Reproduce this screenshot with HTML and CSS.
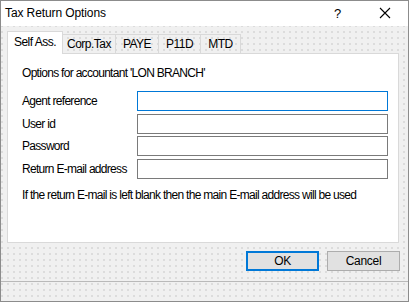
FILE: index.html
```html
<!DOCTYPE html>
<html>
<head>
<meta charset="utf-8">
<link rel="stylesheet" href="styles.css">
</head>
<body>
<div class="window">
  <div class="titlebar">
    <span class="title">Tax Return Options</span>
    <span class="help">?</span>
    <span class="close"><svg width="12" height="12" viewBox="0 0 12 12"><path d="M1 1L11 11M11 1L1 11" stroke="#000" stroke-width="1.1" fill="none"/></svg></span>
  </div>
  <div class="body">
    <div class="tabs">
      <div class="tab active">Self Ass.</div>
      <div class="tab">Corp.Tax</div>
      <div class="tab">PAYE</div>
      <div class="tab">P11D</div>
      <div class="tab">MTD</div>
    </div>
    <div class="panel">
      <div class="intro">Options for accountant 'LON BRANCH'</div>
      <div class="form">
        <label class="lbl">Agent reference</label><div class="field focused"></div>
        <label class="lbl">User id</label><div class="field"></div>
        <label class="lbl">Password</label><div class="field"></div>
        <label class="lbl">Return E-mail address</label><div class="field"></div>
      </div>
      <div class="note">If the return E-mail is left blank then the main E-mail address will be used</div>
    </div>
    <div class="buttons">
      <div class="btn default">OK</div>
      <div class="btn">Cancel</div>
    </div>
  </div>
  <div class="statusbar"></div>
</div>
</body>
</html>
```
FILE: styles.css
```css
html, body {
  margin: 0;
  padding: 0;
  background: #ffffff;
}
body {
  font-family: "Liberation Sans", Arial, sans-serif;
  font-size: 12px;
  color: #000;
}
.window {
  width: 409px;
  height: 302px;
  box-sizing: border-box;
  border: 1px solid #8c8c8c;
  display: flex;
  flex-direction: column;
  background-color: #f0f0f0;
  background-image: radial-gradient(circle at 1px 1px, #dcdcdc 0.7px, transparent 0.9px);
  background-size: 6px 6px;
}
.titlebar {
  height: 25px;
  background: #ffffff;
  display: flex;
  align-items: center;
  flex: none;
}
.title {
  margin-left: 4px;
  font-size: 12px;
  letter-spacing: -0.1px;
  flex: 1;
  padding-bottom: 1px;
}
.help {
  font-size: 13px;
  width: 12px;
  margin-right: 33px;
  padding-bottom: 1px;
}
.close {
  display: flex;
  margin-right: 17px;
  padding-bottom: 1px;
}
.body {
  height: 255px;
  box-sizing: border-box;
  padding: 5px 8px 0 6px;
  display: flex;
  flex-direction: column;
  flex: none;
}
.tabs {
  display: flex;
  align-items: flex-end;
  height: 22px;
  letter-spacing: -0.5px;
}
.tab {
  height: 19px;
  box-sizing: border-box;
  border: 1px solid #d9d9d9;
  border-bottom: none;
  border-left: none;
  padding: 0 5px;
  display: flex;
  align-items: center;
  justify-content: center;
}
.tab:nth-child(2) { width: 53px; }
.tab:nth-child(3) { width: 43px; }
.tab:nth-child(4) { width: 42px; }
.tab:nth-child(5) { width: 40px; }
.tab.active {
  width: 56px;
  height: 23px;
  margin-bottom: -1px;
  background: #ffffff;
  border-left: 1px solid #d9d9d9;
  position: relative;
  z-index: 1;
  padding-bottom: 3px;
}
.panel {
  width: 392px;
  height: 190px;
  box-sizing: border-box;
  border: 1px solid #d9d9d9;
  background: #ffffff;
  padding: 12px 0 0 14px;
  letter-spacing: -0.7px;
}
.intro {
  line-height: 14px;
}
.form {
  margin-top: 11px;
  display: grid;
  grid-template-columns: 115px 251px;
  grid-auto-rows: 20px;
  row-gap: 2.67px;
  align-items: center;
}
.field {
  height: 20px;
  box-sizing: border-box;
  border: 1px solid #7a7a7a;
  background: #fff;
}
.field.focused {
  border-color: #0078d7;
}
.note {
  margin-top: 9px;
  line-height: 14px;
}
.buttons {
  display: flex;
  justify-content: flex-end;
  gap: 8px;
  margin-top: 8px;
}
.btn {
  width: 73px;
  height: 20px;
  box-sizing: border-box;
  border: 1px solid #adadad;
  background: #e1e1e1;
  display: flex;
  align-items: center;
  justify-content: center;
  letter-spacing: -0.3px;
}
.btn.default {
  border: 2px solid #0078d7;
}
.statusbar {
  flex: 1;
  border-top: 1px solid #b9b9b9;
}
```
